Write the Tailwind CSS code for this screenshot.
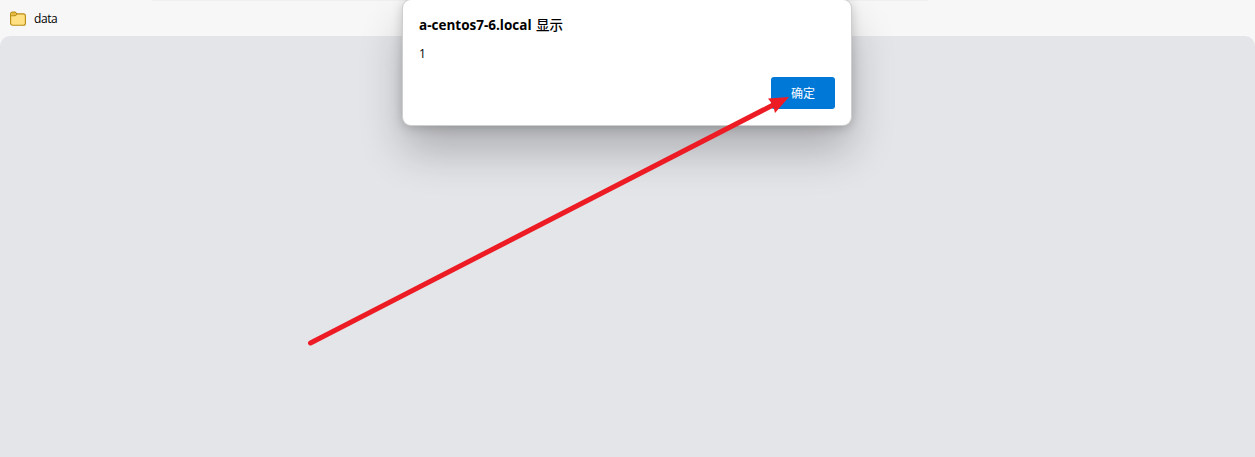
<!DOCTYPE html>
<html lang="zh-CN">
<head>
<meta charset="utf-8">
<title>data</title>
<script src="https://cdn.jsdelivr.net/npm/@tailwindcss/browser@4"></script>
</head>
<body class="relative flex h-screen flex-col overflow-hidden bg-[#f7f7f7] font-['Open_Sans','Noto_Sans_CJK_SC',sans-serif] text-black">
  <div class="absolute left-[152px] top-0 h-px w-[776px] bg-[#f0f0f0]"></div>
  <header class="flex h-9 shrink-0 items-center gap-2 pl-[10px] pt-[2px]">
    <svg class="h-4 w-4" viewBox="0 0 16 16" fill="none" stroke="#b98a10">
      <path d="M.6 3A1.9 1.9 0 0 1 2.5 1.1H5L7 2.9H13.4A2 2 0 0 1 15.4 4.9V12.3A2 2 0 0 1 13.4 14.3H2.6A2 2 0 0 1 .6 12.3Z" fill="#ffe082" stroke-width="1.1"/>
      <path d="M.8 4.7H4.6Q5.3 4.7 5.8 4.1L7 2.9" stroke-width="1.1"/>
      <path d="M1.3 3.7Q1.3 1.9 2.8 1.8H4.7L6 2.9 4.8 4H1.3Z" fill="#e5b93c" stroke="none"/>
    </svg>
    <span class="text-[12px] leading-4 tracking-[-0.4px]">data</span>
  </header>
  <main class="grow rounded-t-[10px] bg-[#e4e5e9]"></main>

  <section role="dialog" class="absolute left-[403px] top-0 flex h-[125px] w-[448px] flex-col rounded-[8px] bg-white px-4 pt-4 shadow-[0_0_0_1px_#cfcfd0,0_2px_12px_rgba(0,0,0,0.22),0_26px_44px_rgba(0,0,0,0.24)]">
    <h1 class="h-[18px] whitespace-nowrap text-[13.5px] leading-[18px] font-bold"><span class="inline-block w-[117px]">a-centos7-6.local</span><span class="font-medium">显示</span></h1>
    <p class="mt-[11px] h-[18px] text-[12px] leading-[18px]">1</p>
    <button class="mt-[14px] h-8 w-16 self-end rounded-[3px] bg-[#0078d7] pt-px text-[12px] leading-8 text-white">确定</button>
  </section>

  <svg class="absolute inset-0 h-[457px] w-[1255px]" viewBox="0 0 1255 457">
    <path d="M310.5 343L775 104" stroke="#ed1c24" stroke-width="5" stroke-linecap="round"/>
    <path d="M789 97L768 98.5L773 105L775 113Z" fill="#ed1c24"/>
  </svg>
</body>
</html>
